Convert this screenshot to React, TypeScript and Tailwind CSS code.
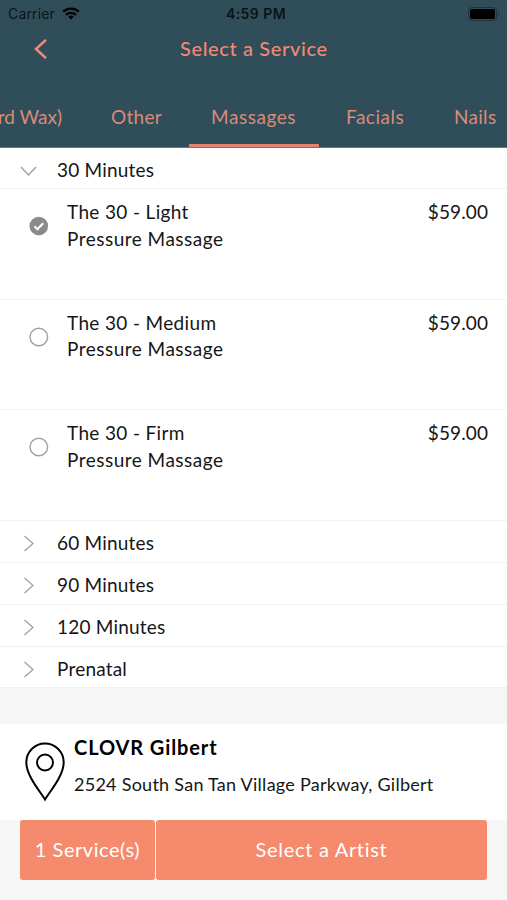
const services = [
  { first: 'The 30 - Light', second: 'Pressure Massage', price: '$59.00', selected: true },
  { first: 'The 30 - Medium', second: 'Pressure Massage', price: '$59.00', selected: false },
  { first: 'The 30 - Firm', second: 'Pressure Massage', price: '$59.00', selected: false },
];

const groups = ['60 Minutes', '90 Minutes', '120 Minutes', 'Prenatal'];

function StatusBar() {
  return (
    <div className="grid h-[27px] grid-cols-3 items-center pl-2 pr-[7px] font-['Inter',sans-serif] text-[14px] text-[#0b1318]">
      <div className="flex items-center gap-[7px]">
        <span className="tracking-[0.15px]">Carrier</span>
        <svg width="18" height="13" viewBox="0 0 18 13" fill="none" stroke="#000" strokeWidth="2.3">
          <path d="M1.2 4.7a11.2 11.2 0 0 1 15.6 0" />
          <path d="M4 7.8a7.2 7.2 0 0 1 10 0" />
          <path d="M9 12.5 6.2 9.8a4 4 0 0 1 5.6 0Z" fill="#000" stroke="none" />
        </svg>
      </div>
      <span className="whitespace-nowrap pl-[4px] text-center font-semibold tracking-[0.45px]">4:59 PM</span>
      <svg className="justify-self-end" width="32" height="14" viewBox="0 0 32 14">
        <rect x="0.5" y="0.5" width="28" height="13" rx="3.5" fill="none" stroke="#1d333d" />
        <rect x="2" y="2" width="25" height="10" rx="2" fill="#000" />
        <path d="M30 5v4c1.6-.6 1.6-3.4 0-4Z" fill="#1d333d" />
      </svg>
    </div>
  );
}

function Tabs() {
  return (
    <div className="flex h-[61px] overflow-hidden whitespace-nowrap text-[19px] text-[#d88c78]">
      <div className="flex w-[84px] shrink-0 justify-end pr-[22px] pt-[17px]">
        <span>rd Wax)</span>
      </div>
      <div className="w-[105px] shrink-0 pl-[27px] pt-[17px] tracking-[0.3px]">Other</div>
      <div className="w-[130px] shrink-0 border-b-[3px] border-[#e5826b] pl-[22px] pt-[17px] tracking-[0.55px]">Massages</div>
      <div className="w-[108px] shrink-0 pl-[27px] pt-[17px] tracking-[0.5px]">Facials</div>
      <div className="w-[100px] shrink-0 pl-[27px] pt-[17px] tracking-[0.3px]">Nails</div>
    </div>
  );
}

function Radio({ selected }: { selected: boolean }) {
  return (
    <svg className="mt-[27px] shrink-0" width="20" height="20" viewBox="0 0 20 20" fill="none">
      {selected ? (
        <>
          <circle cx="9.8" cy="10" r="9.3" fill="#8a8a8a" />
          <path d="m5.4 10.300 3 2.900 5.800-6" stroke="#fff" strokeWidth="2.1" />
        </>
      ) : (
        <circle cx="9.8" cy="10" r="8.8" stroke="#a0a0a0" strokeWidth="1.4" />
      )}
    </svg>
  );
}

export default function App() {
  return (
    <div className="flex h-[900px] w-[507px] flex-col overflow-hidden bg-[#f6f6f6] font-['Lato',sans-serif] text-[19px] text-[#161616]">
      <header className="h-[148px] shrink-0 border-b border-[#65777f] bg-[#304d5a]">
        <StatusBar />
        <div className="flex h-[59px] items-start text-[#ee8b72]">
          <svg className="ml-[34px] mt-3" width="13" height="20" viewBox="0 0 13 20" fill="none" stroke="currentColor" strokeWidth="2.5">
            <path d="M12 .8 2 10l10 9.2" />
          </svg>
          <h1 className="ml-[133px] mt-[6px] text-[20px] font-medium leading-[30px] tracking-[0.63px]">Select a Service</h1>
        </div>
        <Tabs />
      </header>

      <main className="shrink-0 bg-white">
        <div className="flex h-[41px] items-center border-b border-[#f1f1f1]">
          <svg className="ml-5 mr-[20px] mt-[5px]" width="17" height="10" viewBox="0 0 17 10" fill="none" stroke="#a3a3a3" strokeWidth="1.4">
            <path d="m1 1 7.5 8L16 1" />
          </svg>
          <span className="pt-[5px] tracking-[0.2px]">30 Minutes</span>
        </div>

        {services.map((s) => (
          <div key={s.first} className="flex h-[110.5px] items-start border-b border-[#f3f3f3] pl-[29px] pr-[19px]">
            <Radio selected={s.selected} />
            <div className="ml-[18px] mt-[10px] flex-1 leading-[26.5px]">
              <div className="tracking-[0.35px]">{s.first}</div>
              <div className="tracking-[0.48px]">{s.second}</div>
            </div>
            <div className="mt-[9px] leading-[27px] tracking-[0.1px]">{s.price}</div>
          </div>
        ))}

        {groups.map((g) => (
          <div key={g} className="flex h-[42px] items-center border-b border-[#f1f1f1] last:h-[41px]">
            <svg className="ml-[23px] mr-[23px] mt-[5px]" width="11" height="17" viewBox="0 0 11 17" fill="none" stroke="#a3a3a3" strokeWidth="1.4">
              <path d="m1.500 1 8.500 7.500L1.500 16" />
            </svg>
            <span className="pt-[5px] tracking-[0.2px]">{g}</span>
          </div>
        ))}
      </main>

      <footer className="mt-[36px] shrink-0">
        <div className="flex h-[96px] items-start bg-white pl-[25px]">
          <svg className="mt-[18px]" width="40" height="60" viewBox="0 0 40 60" fill="none" stroke="#000" strokeWidth="2">
            <path d="M20 57.500C16 50.500 1.300 34 1.300 20.500a18.700 19 0 0 1 37.400 0C38.700 34 24 50.500 20 57.500Z" />
            <circle cx="20" cy="20.500" r="8" />
          </svg>
          <div className="ml-[9px] mt-[9px]">
            <div className="text-[20px] font-bold leading-[28px] tracking-[0.9px] text-black">CLOVR Gilbert</div>
            <div className="mt-[10px] text-[18px] leading-[26px] tracking-[0.26px]">2524 South San Tan Village Parkway, Gilbert</div>
          </div>
        </div>
        <div className="flex h-[61px] gap-px px-5 pb-px text-[20px] text-white">
          <button className="w-[135px] rounded-[3px] bg-[#f58a6d] pb-px tracking-[0.55px]">1 Service(s)</button>
          <button className="flex-1 rounded-[3px] bg-[#f58a6d] pb-px tracking-[0.7px]">Select a Artist</button>
        </div>
      </footer>
    </div>
  );
}
